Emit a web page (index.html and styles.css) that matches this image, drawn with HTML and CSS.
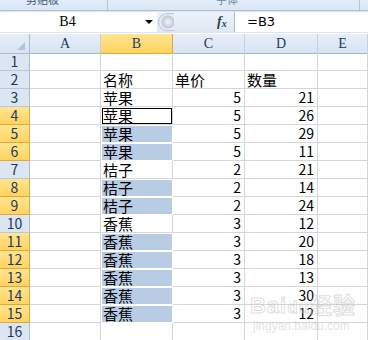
FILE: index.html
```html
<!DOCTYPE html>
<html lang="zh-CN">
<head>
    <meta charset="UTF-8" />
    <title>Excel - Sheet1</title>
    <link rel="stylesheet" href="styles.css">
</head>
<body>

    <div class="ribbon">
        <div class="group g1"><span class="group-label">剪贴板</span></div>
        <div class="group g2"><span class="group-label small">字体</span></div>
        <div class="group g3"></div>
    </div>

    <div class="formula-bar">
        <div class="name-box">
            <span class="name">B4</span>
            <span class="drop"></span>
        </div>
        <div class="fx-area">
            <span class="knob"></span>
            <span class="fx">f<sub>x</sub></span>
        </div>
        <div class="formula">=B3</div>
    </div>

    <div class="sheet">
        <div class="row head">
            <div class="corner"><span class="tri"></span></div>
            <div class="col">A</div>
            <div class="col on">B</div>
            <div class="col">C</div>
            <div class="col">D</div>
            <div class="col">E</div>
        </div>
        <div class="row">
            <div class="num">1</div>
            <div class="cell"></div><div class="cell"></div><div class="cell"></div><div class="cell"></div><div class="cell"></div>
        </div>
        <div class="row">
            <div class="num">2</div>
            <div class="cell"></div><div class="cell txt">名称</div><div class="cell txt">单价</div><div class="cell txt">数量</div><div class="cell"></div>
        </div>
        <div class="row">
            <div class="num">3</div>
            <div class="cell"></div><div class="cell txt">苹果</div><div class="cell val">5</div><div class="cell val">21</div><div class="cell"></div>
        </div>
        <div class="row">
            <div class="num on">4</div>
            <div class="cell"></div><div class="cell txt active">苹果</div><div class="cell val">5</div><div class="cell val">26</div><div class="cell"></div>
        </div>
        <div class="row">
            <div class="num on">5</div>
            <div class="cell"></div><div class="cell txt sel">苹果</div><div class="cell val">5</div><div class="cell val">29</div><div class="cell"></div>
        </div>
        <div class="row">
            <div class="num on">6</div>
            <div class="cell"></div><div class="cell txt sel">苹果</div><div class="cell val">5</div><div class="cell val">11</div><div class="cell"></div>
        </div>
        <div class="row">
            <div class="num">7</div>
            <div class="cell"></div><div class="cell txt">桔子</div><div class="cell val">2</div><div class="cell val">21</div><div class="cell"></div>
        </div>
        <div class="row">
            <div class="num on">8</div>
            <div class="cell"></div><div class="cell txt sel">桔子</div><div class="cell val">2</div><div class="cell val">14</div><div class="cell"></div>
        </div>
        <div class="row">
            <div class="num on">9</div>
            <div class="cell"></div><div class="cell txt sel">桔子</div><div class="cell val">2</div><div class="cell val">24</div><div class="cell"></div>
        </div>
        <div class="row">
            <div class="num">10</div>
            <div class="cell"></div><div class="cell txt">香蕉</div><div class="cell val">3</div><div class="cell val">12</div><div class="cell"></div>
        </div>
        <div class="row">
            <div class="num on">11</div>
            <div class="cell"></div><div class="cell txt sel">香蕉</div><div class="cell val">3</div><div class="cell val">20</div><div class="cell"></div>
        </div>
        <div class="row">
            <div class="num on">12</div>
            <div class="cell"></div><div class="cell txt sel">香蕉</div><div class="cell val">3</div><div class="cell val">18</div><div class="cell"></div>
        </div>
        <div class="row">
            <div class="num on">13</div>
            <div class="cell"></div><div class="cell txt sel">香蕉</div><div class="cell val">3</div><div class="cell val">13</div><div class="cell"></div>
        </div>
        <div class="row">
            <div class="num on">14</div>
            <div class="cell"></div><div class="cell txt sel">香蕉</div><div class="cell val">3</div><div class="cell val">30</div><div class="cell"></div>
        </div>
        <div class="row">
            <div class="num on">15</div>
            <div class="cell"></div><div class="cell txt sel">香蕉</div><div class="cell val">3</div><div class="cell val">12</div><div class="cell"></div>
        </div>
        <div class="row">
            <div class="num">16</div>
            <div class="cell"></div><div class="cell"></div><div class="cell"></div><div class="cell"></div><div class="cell"></div>
        </div>

        <div class="watermark">
            <span class="wm-logo">Bai<span class="paw">du</span>经验</span>
            <span class="wm-url">jingyan.baidu.com</span>
        </div>
    </div>

</body>
</html>
```

FILE: styles.css
```css
body {
    margin: 0;
    width: 368px;
    height: 340px;
    overflow: hidden;
    background-color: #fff;
    font-family: 'Noto Sans CJK SC', sans-serif;
    color: #000;
}

/* ribbon strip at the top */
.ribbon {
    display: flex;
    height: 10px;
    background: linear-gradient(#e3ecf8, #dbe6f4);
    border-bottom: 1px solid #aebfd6;
    overflow: hidden;
}

.group {
    position: relative;
    border-right: 1px solid #b3c4da;
    box-sizing: border-box;
}

.g1 { width: 108px; }
.g2 { width: 252px; }
.g3 { flex: 1; border-right: none; }

.group-label {
    display: block;
    margin: -7px 0 0 26px;
    font-size: 11px;
    line-height: 12px;
    color: #3d5b84;
}

.group-label.small {
    margin-left: 108px;
    color: #6f87a8;
}

/* formula bar */
.formula-bar {
    display: flex;
    height: 20px;
    padding: 1px 0;
    background-color: #dbe5f1;
}

.name-box {
    display: flex;
    align-items: center;
    width: 157px;
    background-color: #fff;
}

.name {
    width: 135px;
    text-align: center;
    font-family: 'Liberation Serif', serif;
    font-size: 14px;
}

.drop {
    width: 0;
    height: 0;
    margin-left: 10px;
    border-left: 4px solid transparent;
    border-right: 4px solid transparent;
    border-top: 4px solid #000;
}

.fx-area {
    display: flex;
    align-items: center;
    width: 78px;
    background: linear-gradient(#eef3fa, #dde7f3);
    border-right: 1px solid #a9bcd4;
    box-sizing: border-box;
}

.knob {
    width: 16px;
    height: 18px;
    margin-left: 1px;
    border-radius: 9px 0 0 9px;
    border: 1px solid #b8c6d8;
    border-right: none;
    box-sizing: border-box;
    background: radial-gradient(circle at 9px 8px, #f4f6f9 0, #d3d9e1 4px, #bfc8d4 6px, #e4ebf4 7px);
}

.fx {
    margin-left: 43px;
    font-family: 'Liberation Serif', serif;
    font-style: italic;
    font-weight: bold;
    font-size: 14px;
    color: #2c3f5e;
}

.fx sub {
    font-size: 10px;
    vertical-align: -1px;
}

.formula {
    flex: 1;
    background-color: #fff;
    padding-left: 12px;
    font-family: 'DejaVu Sans', sans-serif;
    font-size: 13px;
    line-height: 20px;
}

/* grid */
.sheet {
    position: relative;
    margin-top: 1px;
}

.row {
    display: grid;
    grid-template-columns: 30px 71px 72px 72px 73px 1fr;
    height: 18px;
}

.row.head {
    height: 19px;
}

.corner,
.col,
.num {
    box-sizing: border-box;
    background: linear-gradient(#e6eef9, #d9e4f1);
    border-right: 1px solid #a8bcd6;
    border-bottom: 1px solid #a8bcd6;
    color: #1e3960;
    text-align: center;
}

.corner {
    position: relative;
}

.tri {
    position: absolute;
    right: 4px;
    bottom: 3px;
    width: 0;
    height: 0;
    border-left: 8px solid transparent;
    border-bottom: 8px solid #b5c3d6;
}

.col {
    font-family: 'Liberation Serif', serif;
    font-size: 14px;
    line-height: 19px;
    border-right-color: #c2d0e2;
    border-bottom-color: #9eb6ce;
}

.num {
    font-family: 'Noto Sans CJK SC', sans-serif;
    font-size: 14px;
    line-height: 17px;
    background: #dce6f2;
    border-bottom-color: #b8c8dc;
}

.col.on,
.num.on {
    background: linear-gradient(#ffe590, #ffd35f);
    border-color: #e1a83e;
}

.cell {
    position: relative;
    box-sizing: border-box;
    border-right: 1px solid #d6d6d6;
    border-bottom: 1px solid #d6d6d6;
    font-size: 15px;
    line-height: 17px;
    white-space: nowrap;
}

.txt {
    padding-left: 2px;
}

.val {
    text-align: right;
    padding-right: 3px;
    font-size: 14px;
}

.sel {
    background-color: #b8cce4;
    border-color: #fff;
    box-shadow: inset 1px 1px 0 #fff;
}

.active::after {
    content: "";
    position: absolute;
    left: 1px;
    top: 1px;
    right: 0;
    bottom: 0;
    border: 1px solid #000;
}

/* faint hollow watermark over the bottom-right cells */
.watermark {
    position: absolute;
    left: 250px;
    top: 261px;
    display: flex;
    flex-direction: column;
    color: rgba(255, 255, 255, 0.2);
    -webkit-text-stroke: 1px rgba(170, 170, 170, 0.4);
    pointer-events: none;
}

.wm-logo {
    font-family: 'Liberation Sans', 'Noto Sans CJK SC', sans-serif;
    font-size: 22px;
    font-weight: bold;
    line-height: 22px;
    letter-spacing: 1px;
}

.paw {
    font-size: 17px;
}

.wm-url {
    font-family: 'Liberation Sans', sans-serif;
    font-size: 12px;
    line-height: 14px;
    padding-left: 3px;
    -webkit-text-stroke: 0;
    color: rgba(170, 170, 170, 0.35);
}
```
